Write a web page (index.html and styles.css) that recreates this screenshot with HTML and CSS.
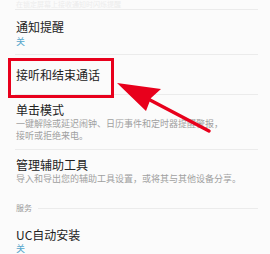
FILE: index.html
```html
<!DOCTYPE html>
<html lang="zh-CN">
<head>
    <meta charset="UTF-8">
    <meta name="viewport" content="width=device-width, initial-scale=1.0">
    <title>辅助功能</title>
    <link rel="stylesheet" href="styles.css">
</head>
<body>

<div class="page">
    <div class="list">
        <div class="prev-item">
            <p class="prev-text">在锁定屏幕上接收通知时闪烁提醒</p>
        </div>

        <div class="item item-first">
            <div class="title">通知提醒</div>
            <div class="value">关</div>
        </div>

        <div class="item item-single">
            <div class="title">接听和结束通话</div>
        </div>

        <div class="item item-desc">
            <div class="title">单击模式</div>
            <div class="desc">
                <div>一键解除或延迟闹钟、日历事件和定时器提醒警报，</div>
                <div>接听或拒绝来电。</div>
            </div>
        </div>

        <div class="item item-desc item-last">
            <div class="title">管理辅助工具</div>
            <div class="desc">导入和导出您的辅助工具设置，或将其与其他设备分享。</div>
        </div>

        <div class="category">
            <span class="category-name">服务</span>
            <span class="category-line"></span>
        </div>

        <div class="item item-service">
            <div class="title">UC自动安装</div>
            <div class="value">关</div>
        </div>
    </div>

    <!-- annotation drawn over the screenshot -->
    <svg class="annotation" width="270" height="254" viewBox="0 0 270 254">
        <rect x="9.5" y="59.5" width="103" height="37" fill="none" stroke="#e8001c" stroke-width="3"/>
        <line x1="150" y1="100" x2="209" y2="131" stroke="#e8001c" stroke-width="3.5" stroke-linecap="round"/>
        <polygon points="117,83 161,89 151,98 146,111" fill="#e8001c"/>
    </svg>
</div>

</body>
</html>
```

FILE: styles.css
```css
html, body {
    margin: 0;
    padding: 0;
}
body {
    font-family: "Noto Sans CJK SC", "Noto Sans", sans-serif;
    background-color: #fbfbfb;
    color: #222;
    overflow: hidden;
}
.page {
    position: relative;
    width: 270px;
    height: 254px;
}
.list {
    margin: 0 12px 0 15px;
}
.prev-item {
    height: 9px;
    border-bottom: 1px solid #ebebeb;
}
.prev-text {
    margin: 0 0 0 1px;
    font-size: 7px;
    line-height: 8px;
    color: #ececec;
}
.item {
    padding-left: 1px;
    border-bottom: 1px solid #ebebeb;
}
.title {
    font-size: 12px;
    line-height: 16px;
    color: #222;
}
.value {
    font-size: 9px;
    line-height: 12px;
    color: #55a6cc;
}
.desc {
    font-size: 9px;
    line-height: 12px;
    color: #a0a0a0;
    white-space: nowrap;
}
.item-first {
    padding: 9px 0 6px 1px;
}
.item-first .value {
    margin-top: 1px;
}
.item-single {
    padding: 12px 0 11px 1px;
}
.item-desc {
    padding: 7px 0 7px 1px;
}
.item-last {
    border-bottom: none;
    padding-bottom: 0;
}
.category {
    display: flex;
    align-items: center;
    gap: 6px;
    margin-top: 17px;
    padding-left: 1px;
    height: 12px;
}
.category-name {
    font-size: 8px;
    line-height: 12px;
    color: #9a9a9a;
}
.category-line {
    flex: 1;
    border-top: 1px solid #ebebeb;
}
.item-service {
    border-bottom: none;
    padding-top: 13px;
}
.annotation {
    position: absolute;
    left: 0;
    top: 0;
    pointer-events: none;
}
```
